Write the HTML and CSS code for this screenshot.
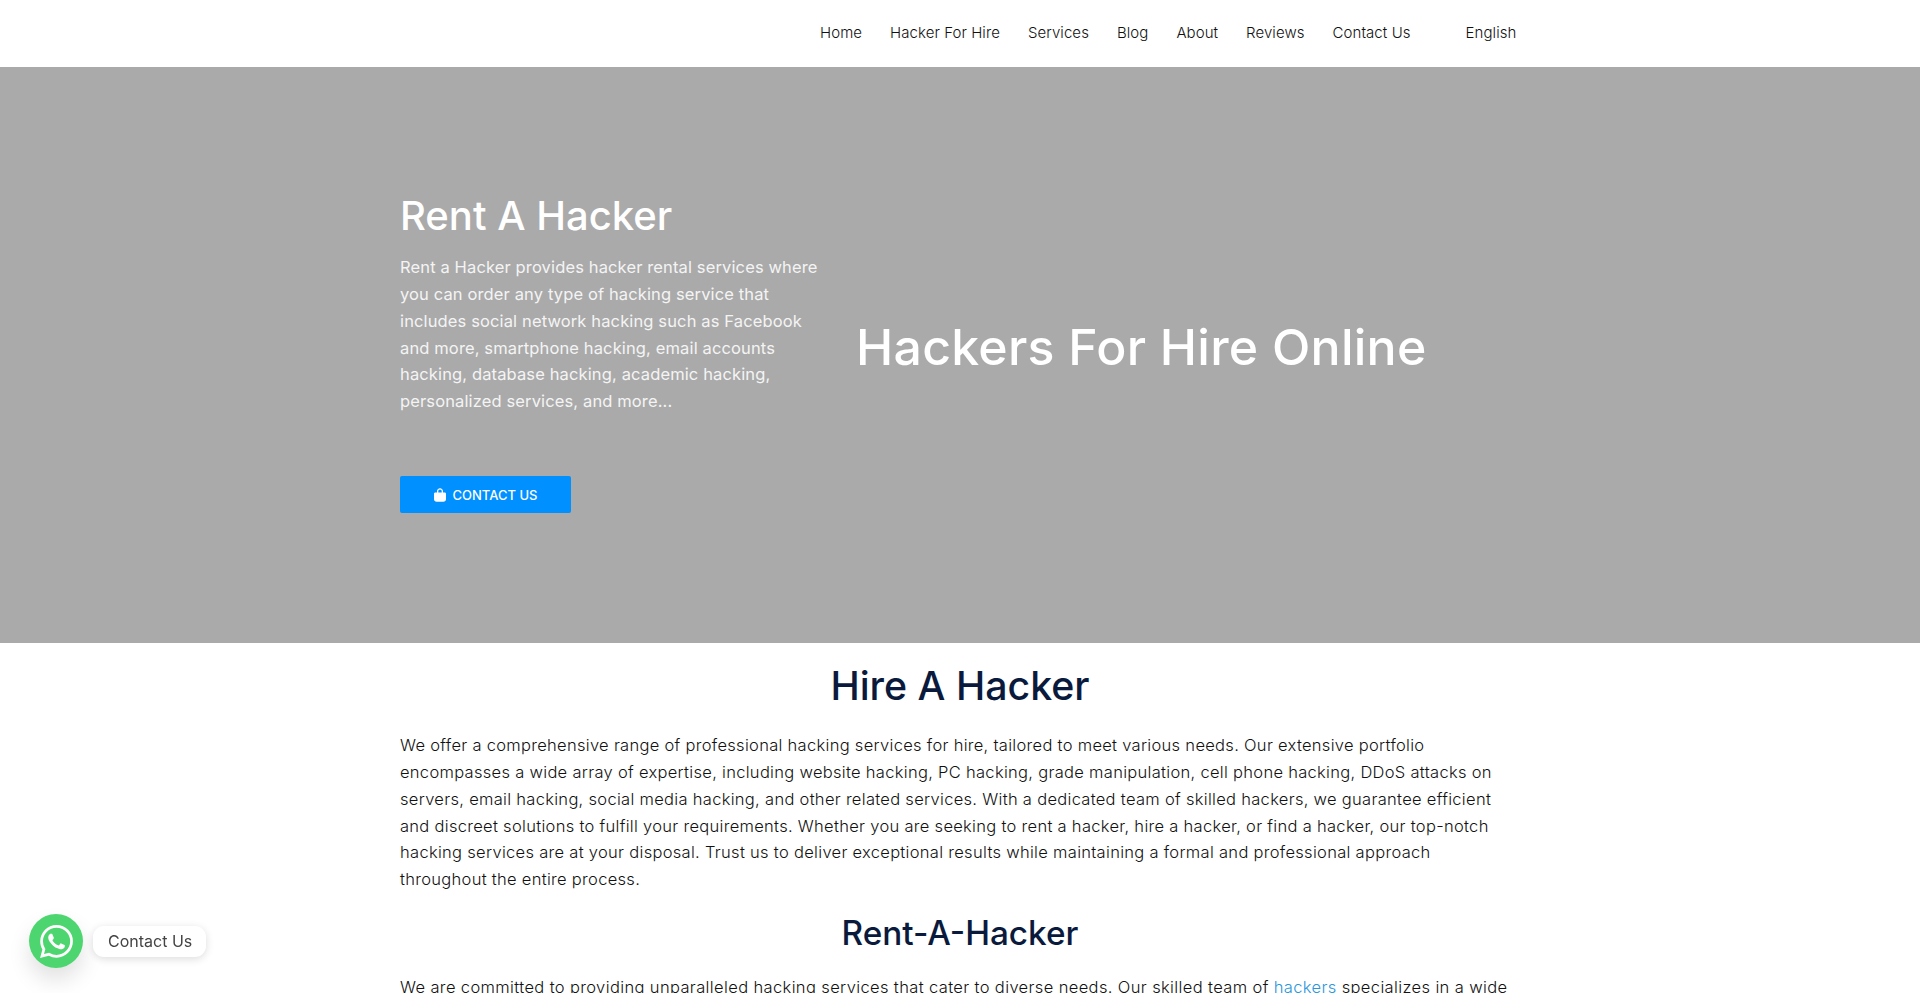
FILE: index.html
```html
<!DOCTYPE html>
<html lang="en">
<head>
<meta charset="utf-8">
<title>Rent A Hacker</title>
<link rel="stylesheet" href="styles.css">
</head>
<body>
<header class="topbar">
  <nav class="nav">
    <a href="#">Home</a>
    <a href="#">Hacker For Hire</a>
    <a href="#">Services</a>
    <a href="#">Blog</a>
    <a href="#">About</a>
    <a href="#">Reviews</a>
    <a href="#">Contact Us</a>
    <a href="#" class="lang">English</a>
  </nav>
</header>
<section class="hero">
  <div class="hero-left">
    <h2 class="hero-title">Rent A Hacker</h2>
    <p class="hero-text">Rent a Hacker provides hacker rental services where<br>you can order any type of hacking service that<br>includes social network hacking such as Facebook<br>and more, smartphone hacking, email accounts<br>hacking, database hacking, academic hacking,<br>personalized services, and more...</p>
    <a href="#" class="btn">
      <svg class="bag" viewBox="0 0 448 512" width="12" height="14"><path fill="#fff" d="M160 112c0-35.300 28.700-64 64-64s64 28.700 64 64v48H160v-48zm-48 48H48c-26.500 0-48 21.500-48 48v208c0 53 43 96 96 96h256c53 0 96-43 96-96V208c0-26.500-21.500-48-48-48h-64v-48C336 50.100 285.900 0 224 0S112 50.100 112 112v48z"/></svg>
      <span>CONTACT US</span>
    </a>
  </div>
  <h1 class="hero-big">Hackers For Hire Online</h1>
</section>
<main class="content">
  <h2 class="h-main">Hire A Hacker</h2>
  <p>We offer a comprehensive range of professional hacking services for hire, tailored to meet various needs. Our extensive portfolio<br>encompasses a wide array of expertise, including website hacking, PC hacking, grade manipulation, cell phone hacking, DDoS attacks on<br>servers, email hacking, social media hacking, and other related services. With a dedicated team of skilled hackers, we guarantee efficient<br>and discreet solutions to fulfill your requirements. Whether you are seeking to rent a hacker, hire a hacker, or find a hacker, our top-notch<br>hacking services are at your disposal. Trust us to deliver exceptional results while maintaining a formal and professional approach<br>throughout the entire process.</p>
  <h2 class="h-sub">Rent-A-Hacker</h2>
  <p class="p-wide">We are committed to providing unparalleled hacking services that cater to diverse needs. Our skilled team of <a href="#" class="link">hackers</a> specializes in a wide</p>
</main>
<a href="#" class="wa">
  <span class="wa-icon">
    <svg viewBox="0 0 24 24" width="33" height="33"><path fill="#fff" d="M17.472 14.382c-.297-.149-1.758-.867-2.030-.967-.273-.099-.471-.148-.670.150-.197.297-.767.966-.940 1.164-.173.199-.347.223-.644.075-.297-.150-1.255-.463-2.390-1.475-.883-.788-1.480-1.761-1.653-2.059-.173-.297-.018-.458.130-.606.134-.133.298-.347.446-.520.149-.174.198-.298.298-.497.099-.198.050-.371-.025-.520-.075-.149-.669-1.612-.916-2.207-.242-.579-.487-.500-.669-.510-.173-.008-.371-.010-.570-.010-.198 0-.520.074-.792.372-.272.297-1.040 1.016-1.040 2.479 0 1.462 1.065 2.875 1.213 3.074.149.198 2.096 3.200 5.077 4.487.709.306 1.262.489 1.694.625.712.227 1.360.195 1.871.118.571-.085 1.758-.719 2.006-1.413.248-.694.248-1.289.173-1.413-.074-.124-.272-.198-.570-.347m-5.421 7.403h-.004a9.870 9.870 0 0 1-5.031-1.378l-.361-.214-3.741.982.998-3.648-.235-.374a9.860 9.860 0 0 1-1.510-5.260c.001-5.450 4.436-9.884 9.888-9.884 2.640 0 5.122 1.030 6.988 2.898a9.825 9.825 0 0 1 2.893 6.994c-.003 5.450-4.437 9.884-9.885 9.884m8.413-18.297A11.815 11.815 0 0 0 12.050 0C5.495 0 .160 5.335.157 11.892c0 2.096.547 4.142 1.588 5.945L.057 24l6.305-1.654a11.882 11.882 0 0 0 5.683 1.448h.005c6.554 0 11.890-5.335 11.893-11.893a11.821 11.821 0 0 0-3.480-8.413z"/></svg>
  </span>
  <span class="wa-label">Contact Us</span>
</a>
</body>
</html>
```
FILE: styles.css
```css
* { box-sizing: border-box; }
html, body { margin: 0; height: 993px; overflow: hidden; background: #fff; }
body { font-family: "Inter", "Liberation Sans", sans-serif; color: #222; }
a { text-decoration: none; color: inherit; }

.topbar { height: 67px; background: #fff; display: flex; justify-content: flex-start; }
.nav { margin-left: 820px; display: flex; align-items: center; gap: 28px; font-size: 15px; font-weight: 300; letter-spacing: .07px; color: #111; height: 65px; }
.nav .lang { margin-left: 27px; }

.hero { height: 576px; background: #aaa; padding: 0 0 0 400px; display: flex; align-items: flex-start; color: #fff; }
.hero-left { width: 456px; padding-top: 125px; }
.hero-title { margin: 0; font-size: 40px; line-height: 48px; font-weight: 500; }
.hero-text { margin: 14px 0 0; font-size: 16.500px; line-height: 26.850px; font-weight: 400; letter-spacing: .13px; color: #f4f4f4; }
.btn { display: flex; align-items: center; justify-content: center; gap: 7px; width: 171px; height: 37px; margin-top: 61px; background: #0090ff; border-radius: 2px; color: #fff; font-size: 13px; font-weight: 500; }
.bag { display: block; }
.hero-big { margin: 0; padding-top: 249px; font-size: 50px; line-height: 62px; font-weight: 500; letter-spacing: .25px; white-space: nowrap; }

.content { width: 1120px; margin-left: 400px; text-align: left; }
.content p { margin: 0; font-size: 16.500px; line-height: 26.850px; font-weight: 300; letter-spacing: .3px; color: #111; }
.content .p-wide { letter-spacing: .37px; }
.h-main { margin: 19px 0 22px; text-align: center; font-size: 39.300px; line-height: 48px; font-weight: 500; color: #0a1a3c; }
.h-sub { margin: 19px 0 20px; text-align: center; font-size: 33.300px; line-height: 42px; font-weight: 500; color: #0a1a3c; }
.link { color: #2b96dc; }

.wa { position: fixed; left: 29px; bottom: 25px; display: flex; align-items: center; gap: 10px; }
.wa-icon { width: 54px; height: 54px; border-radius: 50%; background: #4dd66f; display: flex; align-items: center; justify-content: center; box-shadow: 0 12px 22px rgba(0,0,0,.12); }
.wa-label { background: #fff; border-radius: 11px; padding: 0 14px 0 15px; height: 31px; line-height: 31px; font-family: "Inter", sans-serif; font-size: 16px; color: #444; box-shadow: 0 2px 8px rgba(0,0,0,.14); }
```
